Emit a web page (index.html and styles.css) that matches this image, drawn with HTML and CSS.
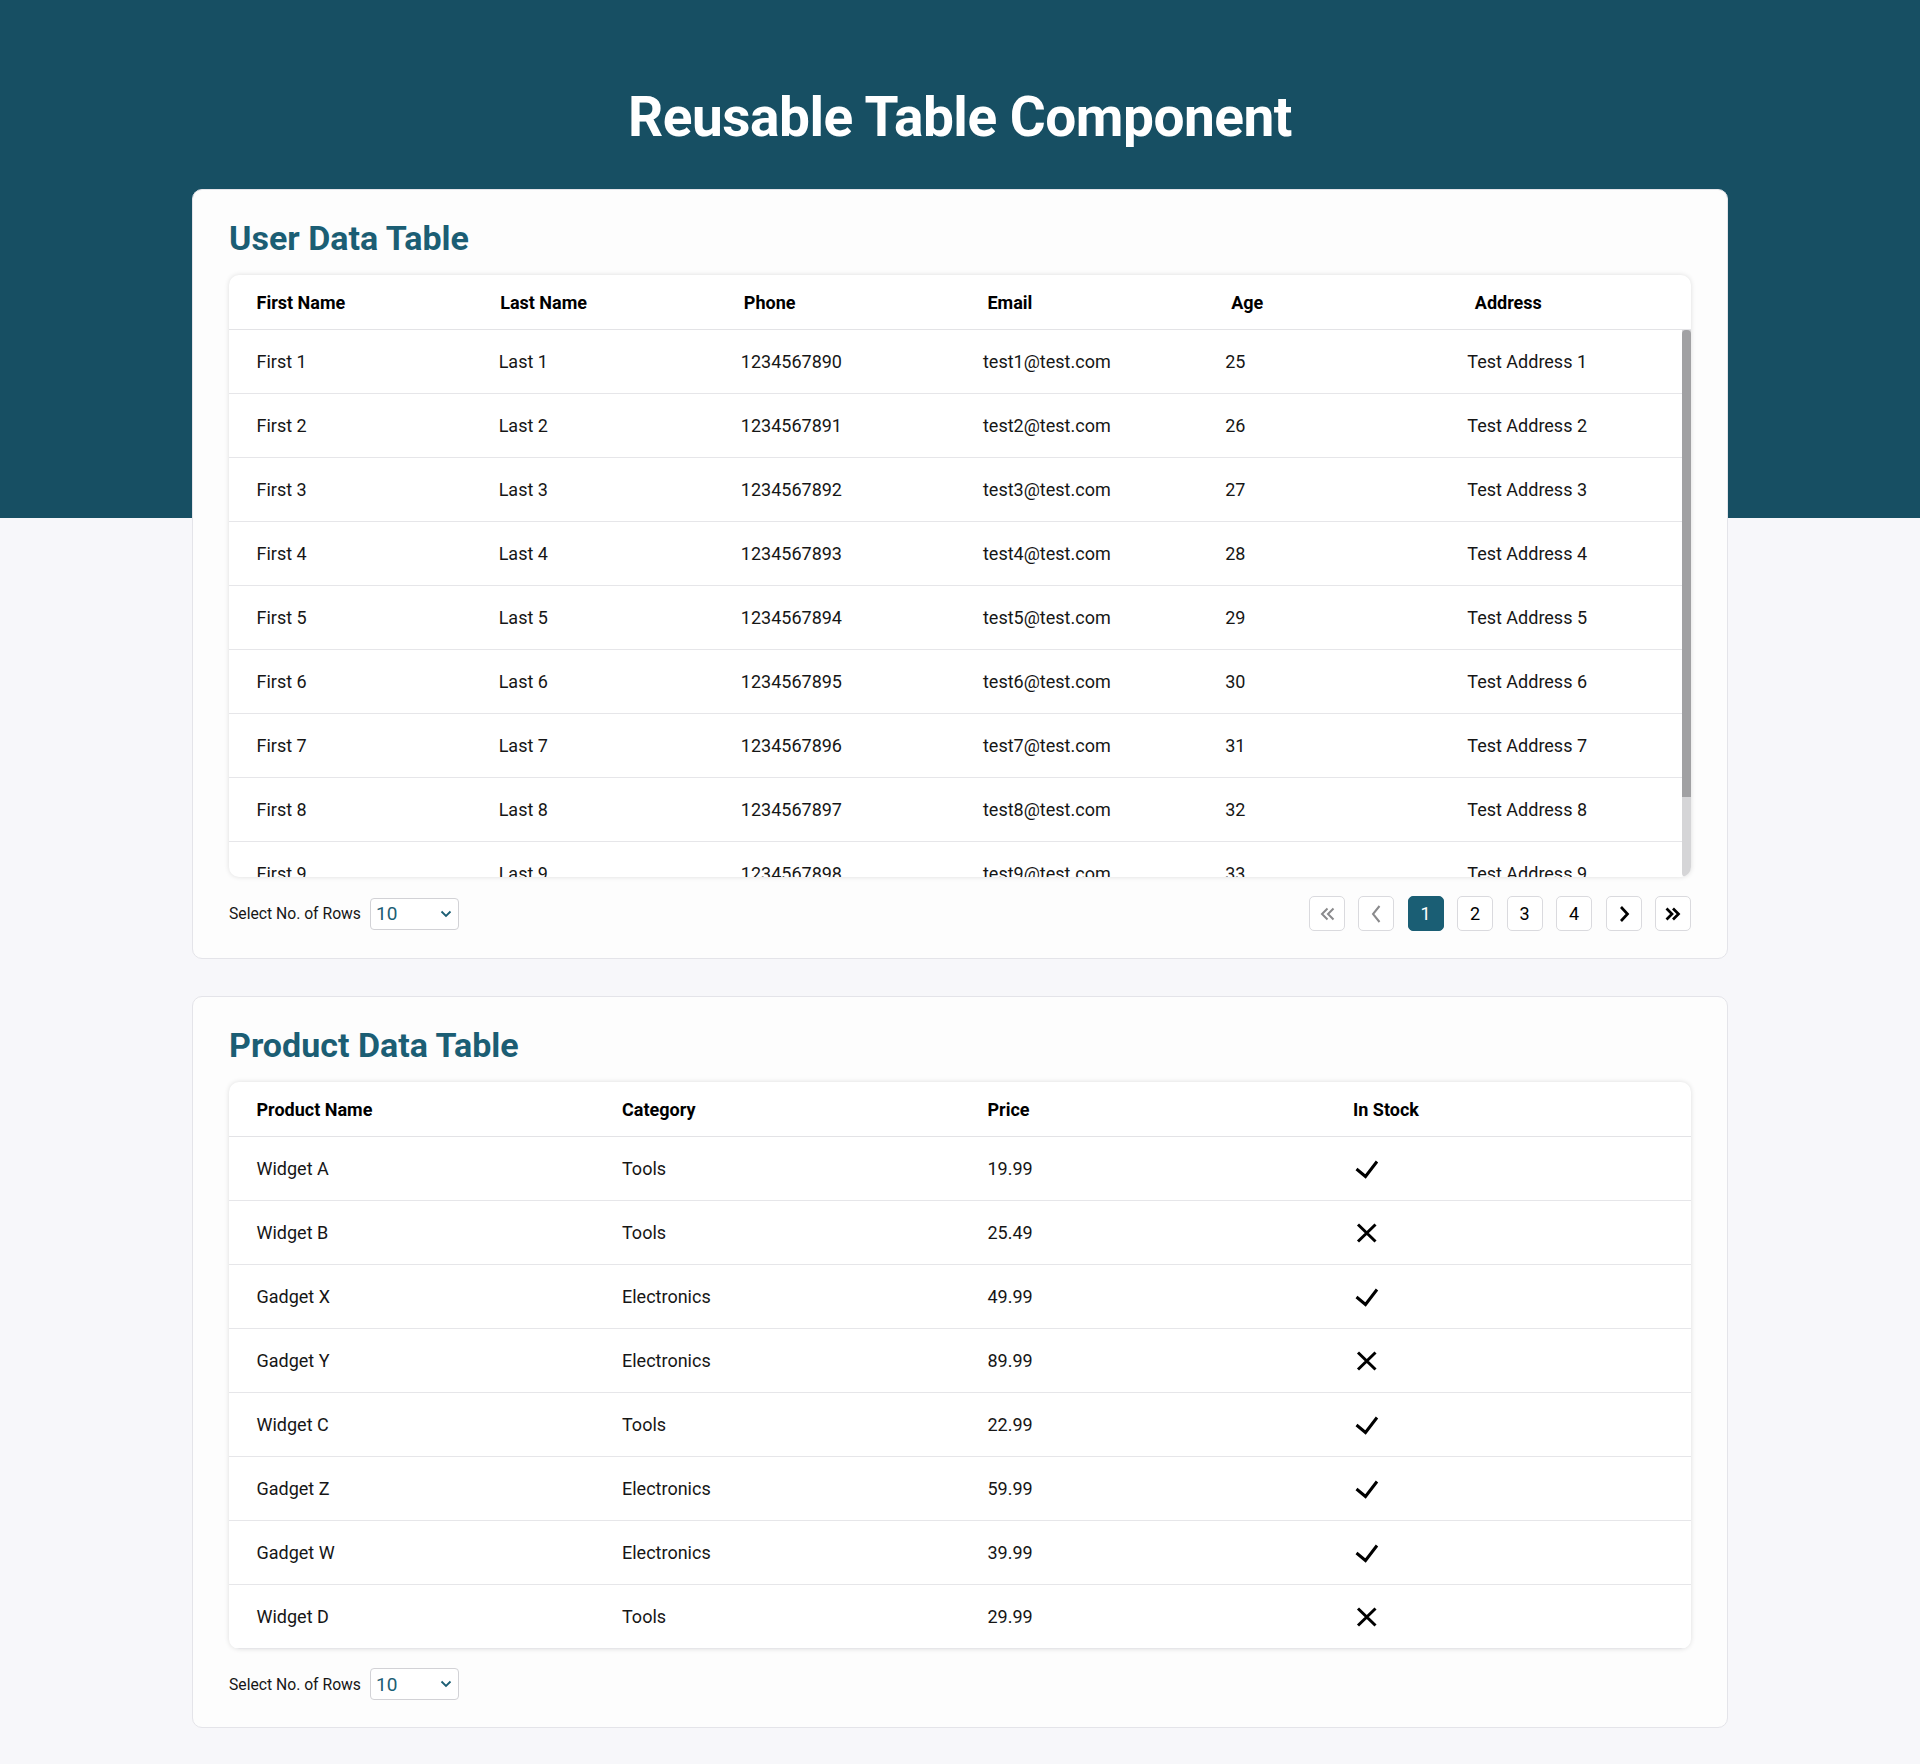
FILE: index.html
```html
<!DOCTYPE html>
<html lang="en">
<head>
<meta charset="utf-8">
<title>Reusable Table Component</title>
<link rel="stylesheet" href="styles.css">
</head>
<body>
<div class="page">
  <h1 class="page-title">Reusable Table Component</h1>

  <section class="card">
    <h2 class="card-title">User Data Table</h2>
    <div class="table-wrap">
      <table class="grid">
        <thead>
          <tr><th>First Name</th><th>Last Name</th><th>Phone</th><th>Email</th><th>Age</th><th>Address</th></tr>
        </thead>
      </table>
      <div class="body-area">
        <div class="body-view">
          <table class="grid">
            <tbody>
              <tr><td>First 1</td><td>Last 1</td><td>1234567890</td><td>test1@test.com</td><td>25</td><td>Test Address 1</td></tr>
              <tr><td>First 2</td><td>Last 2</td><td>1234567891</td><td>test2@test.com</td><td>26</td><td>Test Address 2</td></tr>
              <tr><td>First 3</td><td>Last 3</td><td>1234567892</td><td>test3@test.com</td><td>27</td><td>Test Address 3</td></tr>
              <tr><td>First 4</td><td>Last 4</td><td>1234567893</td><td>test4@test.com</td><td>28</td><td>Test Address 4</td></tr>
              <tr><td>First 5</td><td>Last 5</td><td>1234567894</td><td>test5@test.com</td><td>29</td><td>Test Address 5</td></tr>
              <tr><td>First 6</td><td>Last 6</td><td>1234567895</td><td>test6@test.com</td><td>30</td><td>Test Address 6</td></tr>
              <tr><td>First 7</td><td>Last 7</td><td>1234567896</td><td>test7@test.com</td><td>31</td><td>Test Address 7</td></tr>
              <tr><td>First 8</td><td>Last 8</td><td>1234567897</td><td>test8@test.com</td><td>32</td><td>Test Address 8</td></tr>
              <tr><td>First 9</td><td>Last 9</td><td>1234567898</td><td>test9@test.com</td><td>33</td><td>Test Address 9</td></tr>
              <tr><td>First 10</td><td>Last 10</td><td>1234567899</td><td>test10@test.com</td><td>34</td><td>Test Address 10</td></tr>
            </tbody>
          </table>
        </div>
        <div class="scrollbar"><div class="thumb"></div></div>
      </div>
    </div>
    <div class="controls">
      <div class="rows-select">
        <span class="rows-label">Select No. of Rows</span>
        <div class="select">
          <span>10</span>
          <svg class="select-chev" width="12" height="8" viewBox="0 0 12 8"><polyline points="1.5,1.5 6,6 10.5,1.5"/></svg>
        </div>
      </div>
      <nav class="pager">
        <button class="page-btn is-disabled"><svg width="18" height="18" viewBox="0 0 18 18"><polyline points="9.5,3.5 4,9 9.5,14.5"/><polyline points="15.5,3.5 10,9 15.5,14.5"/></svg></button>
        <button class="page-btn is-disabled"><svg width="18" height="20" viewBox="0 0 18 20"><polyline points="12.5,2 6,10 12.5,18"/></svg></button>
        <button class="page-btn is-active">1</button>
        <button class="page-btn">2</button>
        <button class="page-btn">3</button>
        <button class="page-btn">4</button>
        <button class="page-btn is-strong"><svg width="18" height="20" viewBox="0 0 18 20"><polyline points="6,3 12.5,10 6,17"/></svg></button>
        <button class="page-btn is-strong"><svg width="18" height="18" viewBox="0 0 18 18"><polyline points="2.5,3.5 8,9 2.5,14.5"/><polyline points="9,3.5 14.5,9 9,14.5"/></svg></button>
      </nav>
    </div>
  </section>

  <section class="card">
    <h2 class="card-title">Product Data Table</h2>
    <div class="table-wrap">
      <table class="grid">
        <thead>
          <tr><th>Product Name</th><th>Category</th><th>Price</th><th>In Stock</th></tr>
        </thead>
        <tbody>
          <tr><td>Widget A</td><td>Tools</td><td>19.99</td><td><svg class="ico-yes" width="30" height="22" viewBox="0 0 30 22"><polyline points="5.5,11 14.5,18.5 26,3.5"/></svg></td></tr>
          <tr><td>Widget B</td><td>Tools</td><td>25.49</td><td><svg class="ico-no" width="30" height="22" viewBox="0 0 30 22"><path d="M7 2.5 L24.5 19.5 M24.5 2.5 L7 19.5"/></svg></td></tr>
          <tr><td>Gadget X</td><td>Electronics</td><td>49.99</td><td><svg class="ico-yes" width="30" height="22" viewBox="0 0 30 22"><polyline points="5.5,11 14.5,18.5 26,3.5"/></svg></td></tr>
          <tr><td>Gadget Y</td><td>Electronics</td><td>89.99</td><td><svg class="ico-no" width="30" height="22" viewBox="0 0 30 22"><path d="M7 2.5 L24.5 19.5 M24.5 2.5 L7 19.5"/></svg></td></tr>
          <tr><td>Widget C</td><td>Tools</td><td>22.99</td><td><svg class="ico-yes" width="30" height="22" viewBox="0 0 30 22"><polyline points="5.5,11 14.5,18.5 26,3.5"/></svg></td></tr>
          <tr><td>Gadget Z</td><td>Electronics</td><td>59.99</td><td><svg class="ico-yes" width="30" height="22" viewBox="0 0 30 22"><polyline points="5.5,11 14.5,18.5 26,3.5"/></svg></td></tr>
          <tr><td>Gadget W</td><td>Electronics</td><td>39.99</td><td><svg class="ico-yes" width="30" height="22" viewBox="0 0 30 22"><polyline points="5.5,11 14.5,18.5 26,3.5"/></svg></td></tr>
          <tr><td>Widget D</td><td>Tools</td><td>29.99</td><td><svg class="ico-no" width="30" height="22" viewBox="0 0 30 22"><path d="M7 2.5 L24.5 19.5 M24.5 2.5 L7 19.5"/></svg></td></tr>
        </tbody>
      </table>
    </div>
    <div class="controls">
      <div class="rows-select">
        <span class="rows-label">Select No. of Rows</span>
        <div class="select">
          <span>10</span>
          <svg class="select-chev" width="12" height="8" viewBox="0 0 12 8"><polyline points="1.5,1.5 6,6 10.5,1.5"/></svg>
        </div>
      </div>
    </div>
  </section>
</div>
</body>
</html>
```

FILE: styles.css
```css
html {
  background: #f7f7fa linear-gradient(#174f63, #174f63) no-repeat;
  background-size: 100% 518px;
}

body {
  margin: 0;
  font-family: Roboto, "Noto Sans", "Liberation Sans", sans-serif;
  color: #161616;
}

.page {
  width: 1536px;
  margin: 0 auto;
  padding: 84px 0 30px;
}

.page-title {
  margin: 0 0 39px;
  font-size: 55px;
  line-height: 66px;
  letter-spacing: -0.5px;
  font-weight: 700;
  color: #ffffff;
  text-align: center;
}

.card {
  background: #fdfdfd;
  border: 1px solid #e4e4e9;
  border-radius: 10px;
  padding: 27px 36px 27px;
}

.card + .card {
  margin-top: 37px;
}

.card-title {
  margin: 0 0 16px;
  font-size: 34px;
  line-height: 42px;
  font-weight: 700;
  color: #1b5e74;
}

.table-wrap {
  background: #ffffff;
  border-radius: 10px;
  box-shadow: 0 0 5px rgba(0, 0, 0, 0.13);
  overflow: hidden;
}

.grid {
  width: 100%;
  table-layout: fixed;
  border-collapse: separate;
  border-spacing: 0;
}

.grid th,
.grid td {
  box-sizing: border-box;
  padding: 0 22px 0 27.5px;
  text-align: left;
  vertical-align: middle;
  font-size: 18px;
  white-space: nowrap;
}

.grid th {
  height: 55px;
  font-weight: 700;
  color: #000000;
  border-bottom: 1px solid #e3e3e6;
}

.grid td {
  height: 64px;
  color: #161616;
  border-bottom: 1px solid #e6e6e9;
}

.grid td svg {
  display: block;
  margin-left: -2.5px;
  fill: none;
  stroke: #000000;
  stroke-width: 3;
}

.ico-yes polyline {
  stroke-linejoin: miter;
}

.body-area {
  display: flex;
  height: 547px;
}

.body-view {
  flex: 1;
  min-width: 0;
  overflow: hidden;
}

.scrollbar {
  width: 9px;
  background: #d5d5d7;
  border-radius: 0 0 4px 4px;
}

.thumb {
  height: 467px;
  background: #a1a1a3;
  border-radius: 4px 4px 0 0;
}

.controls {
  display: flex;
  justify-content: space-between;
  align-items: center;
  margin-top: 19px;
}

.rows-select {
  display: flex;
  align-items: center;
  gap: 9px;
}

.rows-label {
  font-size: 15.7px;
  color: #161616;
}

.select {
  box-sizing: border-box;
  width: 89px;
  height: 32px;
  display: flex;
  align-items: center;
  justify-content: space-between;
  padding: 0 6px 0 5px;
  border: 1px solid #d2d2d6;
  border-radius: 4px;
  background: #ffffff;
  color: #1b5e74;
  font-size: 19px;
}

.select-chev {
  fill: none;
  stroke: #1b5e74;
  stroke-width: 1.8;
}

.pager {
  display: flex;
  gap: 13.5px;
}

.page-btn {
  box-sizing: border-box;
  width: 36px;
  height: 35px;
  padding: 0;
  display: flex;
  align-items: center;
  justify-content: center;
  border: 1px solid #dadade;
  border-radius: 5px;
  background: #ffffff;
  font-family: Roboto, "Noto Sans", sans-serif;
  font-size: 18px;
  color: #000000;
}

.page-btn svg {
  display: block;
  fill: none;
  stroke-linecap: butt;
  stroke-linejoin: miter;
}

.page-btn.is-disabled svg {
  stroke: #8a8a8c;
  stroke-width: 2;
}

.page-btn.is-strong svg {
  stroke: #000000;
  stroke-width: 2.7;
}

.page-btn.is-active {
  background: #1a5e74;
  border-color: #1a5e74;
  color: #ffffff;
}
```
